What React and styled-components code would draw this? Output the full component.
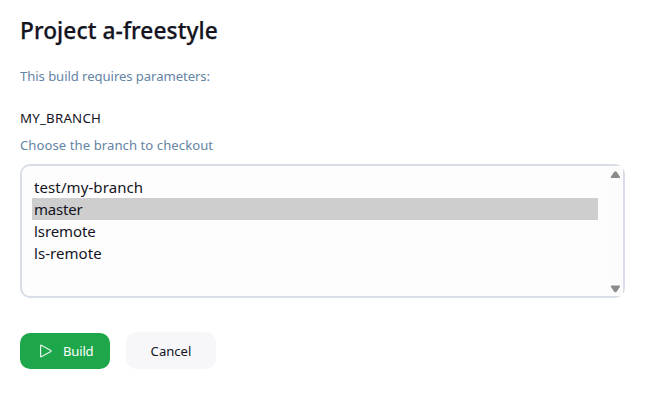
import React from "react";
import styled, { createGlobalStyle } from "styled-components";

const GlobalStyle = createGlobalStyle`
  *, *::before, *::after { box-sizing: border-box; }
  body {
    margin: 0;
    background: #fff;
    color: #14141f;
    font-family: "Noto Sans", "Open Sans", sans-serif;
  }
`;

const Page = styled.main`
  width: 645px;
  height: 403px;
  padding: 14px 20px 0;
  overflow: hidden;
`;

const Title = styled.h1`
  margin: 0;
  font-size: 22.7px;
  line-height: 34px;
  font-weight: 500;
  letter-spacing: 0.09px;
  white-space: nowrap;
  -webkit-text-stroke: 0.25px currentColor;
`;

const Intro = styled.p`
  margin: 18px 0 0;
  font-size: 13.1px;
  line-height: 20px;
  letter-spacing: -0.06px;
  color: #6484a4;
`;

const Label = styled.div`
  margin-top: 22px;
  font-size: 13.3px;
  line-height: 20px;
  letter-spacing: 0.2px;
`;

const Description = styled.div`
  margin-top: 7px;
  font-size: 13.1px;
  line-height: 20px;
  letter-spacing: 0.07px;
  color: #6484a4;
`;

const ListBox = styled.div`
  display: flex;
  width: 605px;
  height: 134px;
  margin-top: 9px;
  border: 2px solid #d8dde8;
  border-radius: 10px;
  background: #fdfdfd;
`;

const Options = styled.ul`
  flex: 1;
  margin: 0;
  padding: 10px;
  list-style: none;
`;

const Option = styled.li`
  height: 22px;
  padding: 0 2px;
  font-size: 15px;
  line-height: 22px;
  letter-spacing: ${(p) => p.$tracking}px;
  background: ${(p) => (p.$selected ? "#cecece" : "transparent")};
`;

const Scrollbar = styled.div`
  display: flex;
  flex-direction: column;
  justify-content: space-between;
  align-items: flex-start;
  width: 15px;
  padding: 4px 0 3px 2px;
  background: #fcfcfc;
`;

const Actions = styled.div`
  display: flex;
  align-items: flex-end;
  gap: 16px;
  margin-top: 34px;
`;

const Button = styled.button`
  display: flex;
  align-items: center;
  justify-content: ${(p) => (p.$primary ? "flex-start" : "center")};
  gap: 10px;
  width: 90px;
  height: ${(p) => (p.$primary ? 36 : 37)}px;
  padding: ${(p) => (p.$primary ? "0 0 0 19px" : "0")};
  border: 0;
  border-radius: 10px;
  background: ${(p) => (p.$primary ? "#1ea64b" : "#f7f7fa")};
  color: ${(p) => (p.$primary ? "#fff" : "#14141f")};
  font-family: inherit;
  font-size: 13.1px;
  line-height: 20px;
  letter-spacing: ${(p) => (p.$primary ? -0.2 : 0)}px;
`;

const Arrow = ({ down }) => (
  <svg width="10" height="8" viewBox="0 0 10 8" aria-hidden="true">
    <path
      d={down ? "M.8 .5H9.2Q10 1 9.4 2L6.2 6.7Q5 8 3.8 6.7L.6 2Q0 1 .8 .5Z" : "M.8 8H9.2Q10 7.4 9.4 6.4L6.2 1.8Q5 .5 3.8 1.8L.6 6.4Q0 7.4 .8 8Z"}
      transform="translate(.4 0)"
      fill="#8b8b8b"
    />
  </svg>
);

const PlayIcon = () => (
  <svg width="14" height="14" viewBox="0 0 14 14" fill="none" aria-hidden="true">
    <path d="M1.6 1.6V12.4Q1.6 13.1 2.3 12.8L11.8 7.4Q12.4 7 11.8 6.6L2.3 1.2Q1.6 .9 1.6 1.6Z" stroke="#e4f5e9" strokeWidth="1.2" />
  </svg>
);

const branches = [
  { name: "test/my-branch", tracking: 0.1 },
  { name: "master", tracking: -0.22 },
  { name: "lsremote", tracking: -0.08 },
  { name: "ls-remote", tracking: 0.05 },
];

export default function App() {
  return (
    <Page>
      <GlobalStyle />
      <Title>Project a-freestyle</Title>
      <Intro>This build requires parameters:</Intro>
      <Label>MY_BRANCH</Label>
      <Description>Choose the branch to checkout</Description>
      <ListBox>
        <Options>
          {branches.map(({ name, tracking }) => (
            <Option key={name} $tracking={tracking} $selected={name === "master"}>{name}</Option>
          ))}
        </Options>
        <Scrollbar>
          <Arrow />
          <Arrow down />
        </Scrollbar>
      </ListBox>
      <Actions>
        <Button $primary>
          <PlayIcon />
          Build
        </Button>
        <Button>Cancel</Button>
      </Actions>
    </Page>
  );
}
